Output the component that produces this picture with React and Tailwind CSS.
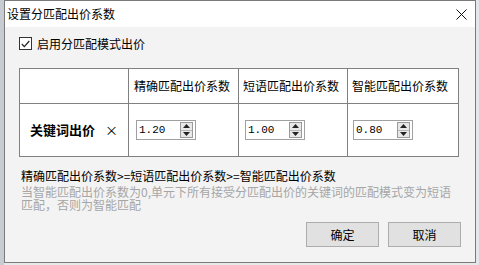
import React from 'react';

function Spinner({ value }) {
    return (
        <div className="flex items-center w-[60px] h-[20px] border border-[#a0a0a0] bg-white pl-[2px] pr-[2px]">
            <span className="flex-1 text-[11px] text-black" style={{ fontFamily: '"Liberation Mono", monospace' }}>
                {value}
            </span>
            <div className="flex flex-col w-[13px] h-[16px] border border-[#9a9a9a] bg-[#e8e8e8]">
                <div className="flex-1 flex items-center justify-center border-b border-[#b5b5b5]">
                    <svg width="7" height="4" viewBox="0 0 7 4">
                        <path d="M0 4 L3.5 0 L7 4 Z" fill="#222" />
                    </svg>
                </div>
                <div className="flex-1 flex items-center justify-center">
                    <svg width="7" height="4" viewBox="0 0 7 4">
                        <path d="M0 0 L3.5 4 L7 0 Z" fill="#222" />
                    </svg>
                </div>
            </div>
        </div>
    );
}

export default function App() {
    const font = { fontFamily: '"Noto Sans CJK SC", "Liberation Sans", sans-serif' };

    return (
        <div className="w-[479px] h-[265px] flex bg-[#e9e9e9] overflow-hidden" style={font}>
            {/* background strip left */}
            <div className="w-[4px] bg-[#c8ccd2]" />

            {/* dialog */}
            <div className="w-[472px] h-[263px] flex flex-col border border-[#7a7a7a] bg-[#f3f3f3]">
                {/* title bar */}
                <div className="h-[26px] flex items-center justify-between bg-white pl-[2px] pr-[8px]">
                    <span className="text-[12px] text-black leading-none">设置分匹配出价系数</span>
                    <svg width="11" height="11" viewBox="0 0 11 11">
                        <path d="M0.5 0.5 L10.5 10.5 M10.5 0.5 L0.5 10.5" stroke="#111" strokeWidth="1" />
                    </svg>
                </div>

                <div className="flex flex-col pl-[14px] pr-[13px]">
                    {/* checkbox */}
                    <div className="flex items-center gap-[5px] mt-[10px]">
                        <div className="w-[13px] h-[13px] border border-[#333] bg-white flex items-center justify-center">
                            <svg width="9" height="8" viewBox="0 0 9 8">
                                <path d="M0.8 4 L3.3 6.6 L8.3 1" stroke="#222" strokeWidth="1.2" fill="none" />
                            </svg>
                        </div>
                        <span className="text-[12px] text-black leading-none">启用分匹配模式出价</span>
                    </div>

                    {/* table */}
                    <div className="mt-[18px] w-[440px] border border-[#808080] bg-white">
                        <div className="grid grid-cols-[109px_110px_109px_1fr] h-[35px] border-b border-[#808080]">
                            <div className="border-r border-[#808080]" />
                            <div className="border-r border-[#808080] flex items-center pl-[5px] text-[12px] text-black">
                                精确匹配出价系数
                            </div>
                            <div className="border-r border-[#808080] flex items-center pl-[4px] text-[12px] text-black">
                                短语匹配出价系数
                            </div>
                            <div className="flex items-center pl-[4px] text-[12px] text-black">智能匹配出价系数</div>
                        </div>
                        <div className="grid grid-cols-[109px_110px_109px_1fr] h-[52px]">
                            <div className="border-r border-[#808080] flex items-center pl-[10px] gap-[10px]">
                                <span className="text-[13px] font-bold text-black">关键词出价</span>
                                <span className="text-[13px] text-black">×</span>
                            </div>
                            <div className="border-r border-[#808080] flex items-center pl-[7px]">
                                <Spinner value="1.20" />
                            </div>
                            <div className="border-r border-[#808080] flex items-center pl-[6px]">
                                <Spinner value="1.00" />
                            </div>
                            <div className="flex items-center pl-[5px]">
                                <Spinner value="0.80" />
                            </div>
                        </div>
                    </div>

                    {/* notes */}
                    <p className="mt-[12px] ml-[2px] text-[12px] text-black leading-[14px]">
                        精确匹配出价系数&gt;=短语匹配出价系数&gt;=智能匹配出价系数
                    </p>
                    <p className="mt-[2px] ml-[2px] text-[12px] text-[#a6a6a6] leading-[13px]">
                        当智能匹配出价系数为0,单元下所有接受分匹配出价的关键词的匹配模式变为短语
                        <br />
                        匹配，否则为智能匹配
                    </p>

                    {/* buttons */}
                    <div className="flex justify-end gap-[9px] mt-[11px] pr-[1px]">
                        <button className="w-[73px] h-[25px] bg-[#e1e1e1] border border-[#adadad] text-[12px] text-black">
                            确定
                        </button>
                        <button className="w-[73px] h-[25px] bg-[#e1e1e1] border border-[#adadad] text-[12px] text-black">
                            取消
                        </button>
                    </div>
                </div>
            </div>

            {/* background strip right */}
            <div className="flex-1 bg-[#e4e6ea]" />
        </div>
    );
}
